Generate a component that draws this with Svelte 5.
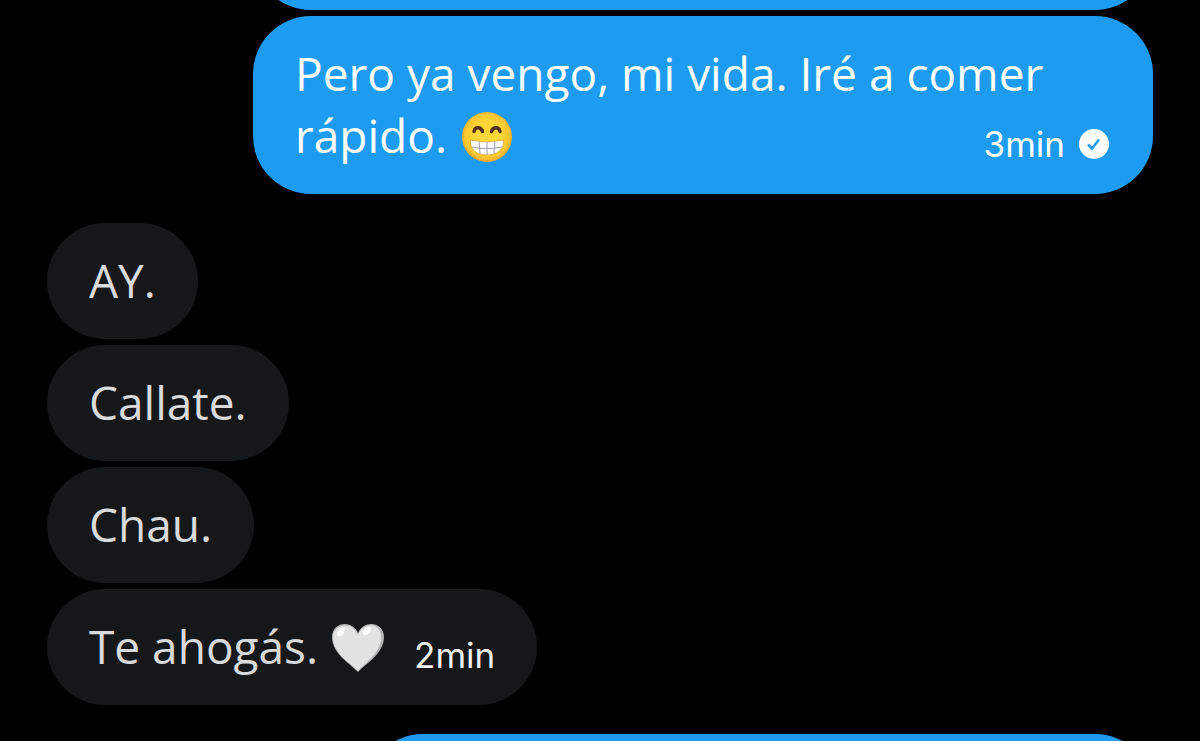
<script lang="ts">
	type Message = {
		text: string;
		sent: boolean;
		emoji?: 'grin' | 'heart';
		time?: string;
	};

	const messages: Message[] = [
		{ text: 'Pero ya vengo, mi vida. Iré a comer rápido.', sent: true, emoji: 'grin', time: '3min' },
		{ text: 'AY.', sent: false },
		{ text: 'Callate.', sent: false },
		{ text: 'Chau.', sent: false },
		{ text: 'Te ahogás.', sent: false, emoji: 'heart', time: '2min' },
	];
</script>

<main>
	<div class="bubble sent previous"></div>

	{#each messages as message, i}
		<div class="bubble" class:sent={message.sent} class:turn={i > 0 && messages[i - 1].sent !== message.sent}>
			<p>
				{message.text}
				{#if message.emoji === 'grin'}
					<svg class="emoji" viewBox="0 0 52 52" role="img" aria-label="😁">
						<defs>
							<radialGradient id="face" cx="50%" cy="48%" r="52%">
								<stop offset="0.5" stop-color="#fdd835" />
								<stop offset="0.85" stop-color="#fbc62f" />
								<stop offset="1" stop-color="#efa42c" />
							</radialGradient>
						</defs>
						<circle cx="26" cy="26" r="25" fill="url(#face)" />
						<path d="M13 20.500c1-5 7-5 8.500 0M30.500 20.500c1.500-5 7.500-5 8.500 0" fill="none" stroke="#55301b" stroke-width="3.500" stroke-linecap="round" />
						<path d="M9.500 29q16.500 3.500 33 0c1 9-6 15-16.500 15S8.500 38 9.500 29z" fill="#fff" stroke="#d99b35" stroke-width="0.700" />
						<path d="M10.500 36q15.500 3 31 0M18 30.500l1 12M26 31v13M34 30.500l-1 12" fill="none" stroke="#a8adb3" stroke-width="1.200" />
					</svg>
				{:else if message.emoji === 'heart'}
					<svg class="emoji" viewBox="0 0 52 52" role="img" aria-label="🤍">
						<path d="M26 50C19 42 0 32 0 15 0 0 20-3 26 11 32-3 52 0 52 15 52 32 33 42 26 50z" fill="#b5b5b5" />
						<path d="M26 49C18 41 1 31 1 15 1 2 20-2 26 13 31 0 48 0 49 14 50 30 33 41 26 49z" fill="#e2e2e2" />
						<ellipse cx="9" cy="10" rx="5" ry="3" fill="#fff" transform="rotate(-48 9 10)" />
						<ellipse cx="35" cy="9" rx="5" ry="3" fill="#fff" transform="rotate(-45 35 9)" />
					</svg>
				{/if}
				{#if message.time}
					<span class="meta">
						<time>{message.time}</time>
						{#if message.sent}
							<svg class="status" viewBox="0 0 32 30" role="img" aria-label="Enviado">
								<circle cx="15" cy="15" r="15" fill="#fff" />
								<path d="M9 15.500l4 4 7-9" fill="none" stroke="#1d9bf0" stroke-width="2.500" />
							</svg>
						{/if}
					</span>
				{/if}
			</p>
		</div>
	{/each}

	<div class="bubble sent turn next"></div>
</main>

<style>
	:global(body) {
		margin: 0;
		background: #000;
	}

	main {
		display: flex;
		flex-direction: column;
		align-items: flex-start;
		gap: 6px;
		height: 100vh;
		box-sizing: border-box;
		padding: 0 47px;
		overflow: hidden;
		font-family: "Open Sans", sans-serif;
	}

	.bubble {
		flex-shrink: 0;
		box-sizing: border-box;
		max-width: 900px;
		min-height: 116px;
		padding: 26px 42px 28px;
		border-radius: 58px;
		background: #161719;
		color: #d9dadc;
	}

	.sent {
		align-self: flex-end;
		background: #1d9bf0;
		color: #fff;
	}

	/* extra space when the other person starts writing */
	.turn {
		margin-top: 23px;
	}

	/* scrolled mostly out of view */
	.previous {
		width: 900px;
		margin-top: -106px;
	}

	.next {
		width: 788px;
	}

	p {
		display: flow-root;
		margin: 0;
		font-size: 46px;
		line-height: 62px;
	}

	.emoji {
		width: 52px;
		height: 52px;
		margin: 0 2px;
		vertical-align: -10px;
	}

	.meta {
		float: right;
		display: flex;
		align-items: center;
		gap: 14px;
		margin: 18px 0 0 28px;
		color: #f0f2f3;
		font-family: Inter, sans-serif;
		font-size: 35px;
		line-height: 44px;
	}

	.sent .meta {
		color: #fff;
	}

	.status {
		width: 32px;
		height: 30px;
	}
</style>
